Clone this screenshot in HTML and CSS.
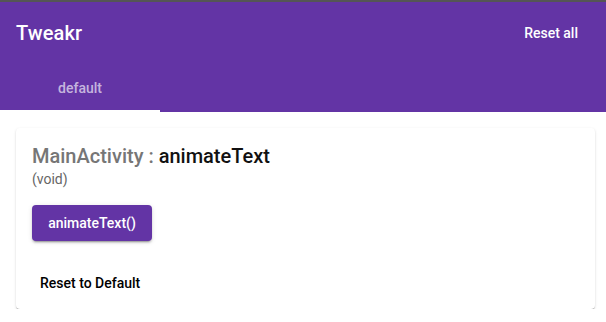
FILE: index.html
```html
<!DOCTYPE html>
<html>
<head>
<meta charset="utf-8">
<link rel="stylesheet" href="styles.css">
</head>
<body>
<div class="app">
  <header class="appbar">
    <div class="toolbar">
      <div class="title">Tweakr</div>
      <button class="btn-text btn-light">Reset all</button>
    </div>
    <div class="tabs">
      <div class="tab">default</div>
    </div>
  </header>
  <main class="content">
    <section class="card">
      <h2 class="card-title"><span class="cls">MainActivity : </span><span class="method">animateText</span></h2>
      <div class="card-sub">(void)</div>
      <div class="actions">
        <button class="btn-contained">animateText()</button>
      </div>
      <div class="footer">
        <button class="btn-text">Reset to Default</button>
      </div>
    </section>
  </main>
</div>
</body>
</html>
```
FILE: styles.css
```css
* { box-sizing: border-box; }
html, body { margin: 0; padding: 0; background: #fff; }
body { font-family: Roboto, "Liberation Sans", sans-serif; }
.app { border-top: 2px solid #555; }
.appbar { background: #6334a5; color: #fff; }
.toolbar {
  height: 62px;
  display: flex;
  align-items: center;
  justify-content: space-between;
  padding: 0 20px 0 16px;
}
.title { font-size: 20px; font-weight: 500; letter-spacing: 0.1px; }
button { font-family: inherit; border: none; cursor: pointer; }
.btn-text {
  background: transparent;
  font-size: 14px;
  font-weight: 500;
  height: 36px;
  padding: 0 8px;
  color: #000;
  border-radius: 4px;
}
.btn-light { color: #fff; }
.tabs { display: flex; height: 48px; }
.tab {
  width: 160px;
  display: flex;
  align-items: center;
  justify-content: center;
  font-size: 14px;
  font-weight: 500;
  color: rgba(255,255,255,0.65);
  border-bottom: 2px solid #fff;
  padding-top: 2px;
}
.content { padding: 16px 11px 0 16px; }
.card {
  background: #fff;
  border-radius: 4px;
  box-shadow: 0 2px 1px -1px rgba(0,0,0,0.25), 0 1px 1px 0 rgba(0,0,0,0.14), 0 1px 3px 0 rgba(0,0,0,0.12);
  padding: 16px 16px 8px 16px;
}
.card-title { margin: 0; font-size: 20px; font-weight: 500; line-height: 24px; }
.cls { color: #767676; }
.method { color: #111; }
.card-sub { font-size: 14px; line-height: 20px; color: #666; margin-top: 1px; }
.actions { margin-top: 16px; }
.btn-contained {
  background: #6334a5;
  color: #fff;
  font-size: 14px;
  font-weight: 500;
  height: 36px;
  width: 120px;
  padding: 0 16px;
  border-radius: 4px;
  box-shadow: 0 3px 1px -2px rgba(0,0,0,0.2), 0 2px 2px 0 rgba(0,0,0,0.14), 0 1px 5px 0 rgba(0,0,0,0.12);
}
.footer { margin-top: 24px; }
```
